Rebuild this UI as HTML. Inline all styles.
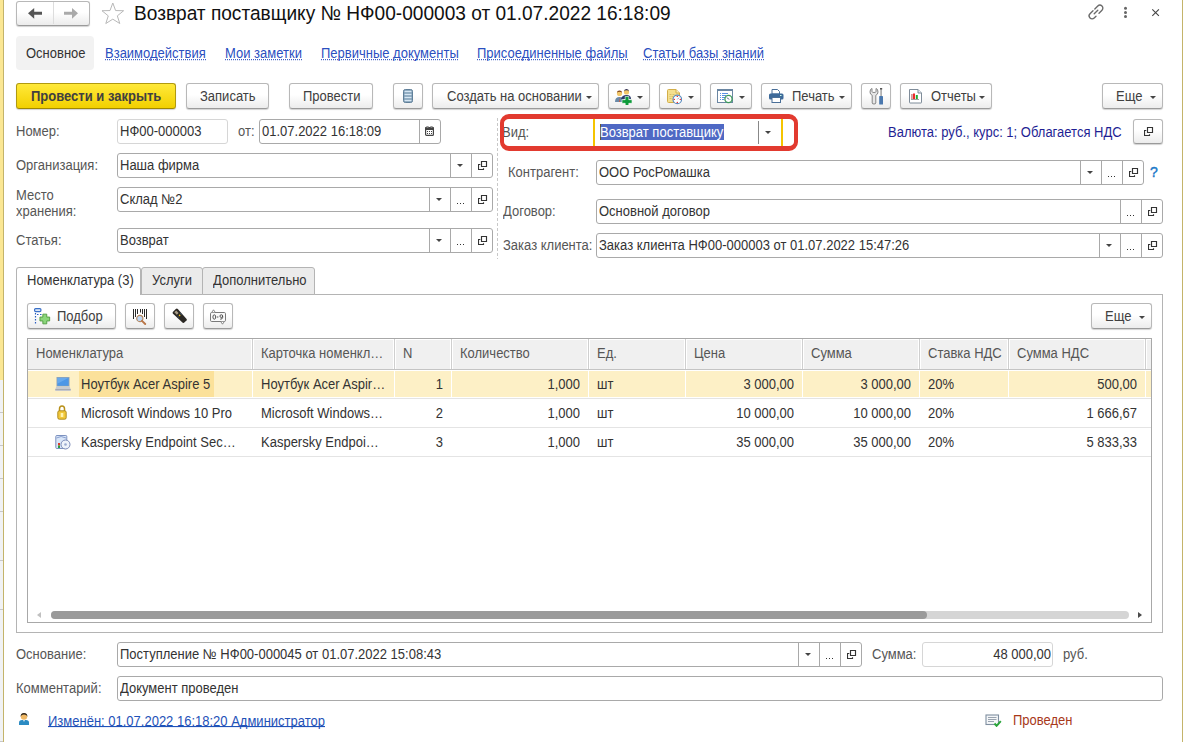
<!DOCTYPE html>
<html><head><meta charset="utf-8">
<style>
*{box-sizing:border-box;margin:0;padding:0}
html,body{width:1183px;height:742px;overflow:hidden;background:#fff}
body{position:relative;font-family:"Liberation Sans",sans-serif;font-size:13px;color:#333}
.a{position:absolute}
.t{position:absolute;line-height:15px;white-space:nowrap}
.t,.v,.bt{transform:scaleY(1.1);transform-origin:0 12px}
.lb{color:#565656}
.btn{position:absolute;height:26px;border:1px solid #b8b8b8;border-bottom-color:#9a9a9a;border-radius:3px;background:linear-gradient(#fff 0,#fff 45%,#ececec 100%);box-shadow:0 1px 1px rgba(0,0,0,.18);line-height:23px;text-align:center;color:#333;white-space:nowrap}
.fld{position:absolute;height:25px;border:1px solid #a9a9a9;border-radius:3px;background:#fff;white-space:nowrap}
.fld .v{position:absolute;left:2px;top:4px;line-height:15px;color:#333}
.seg{position:absolute;top:0;bottom:0;width:21px;border-left:1px solid #a9a9a9}
.dd:after{content:"";position:absolute;left:6px;top:10px;border-left:3px solid transparent;border-right:3px solid transparent;border-top:3px solid #444}
.dots:after{content:"";position:absolute;left:6px;top:15px;width:1px;height:1px;background:#333;box-shadow:3px 0 0 #333,6px 0 0 #333}
.op svg{position:absolute;left:6px;top:7px}
.link{color:#2b4fbf}
.dl{background:repeating-linear-gradient(90deg,#2b4fbf 0 1px,transparent 1px 2px) 0 13px/100% 1px no-repeat}
.bt{position:absolute;top:5px;line-height:15px;color:#404040}
.ba{position:absolute;top:12px;width:0;height:0;border-left:3px solid transparent;border-right:3px solid transparent;border-top:3px solid #444}
.arr{display:inline-block;width:0;height:0;border-left:3.5px solid transparent;border-right:3.5px solid transparent;border-top:3.5px solid #444;vertical-align:middle;margin-left:6px;position:relative;top:-1px}
</style></head><body>
<div class="a" style="left:0;top:0;width:3px;height:380px;background:#fbe794"></div>
<div class="a" style="left:0;top:380px;width:3px;height:362px;background:#f1f2f4"></div>
<div class="a" style="left:0;top:412px;width:3px;height:1px;background:#c8c8c8"></div>
<div class="a" style="left:0;top:445px;width:3px;height:1px;background:#c8c8c8"></div>
<div class="a" style="left:0;top:478px;width:3px;height:1px;background:#c8c8c8"></div>
<div class="a" style="left:0;top:511px;width:3px;height:1px;background:#c8c8c8"></div>
<div class="a" style="left:0;top:560px;width:3px;height:1px;background:#c8c8c8"></div>
<div class="a" style="left:0;top:609px;width:3px;height:1px;background:#c8c8c8"></div>
<div class="a" style="left:0;top:741px;width:3px;height:1px;background:#c8c8c8"></div>
<div class="a" style="left:3px;top:0;width:1px;height:742px;background:#c4b46a"></div>
<div class="a" style="left:1182px;top:0;width:1px;height:742px;background:#c4b46a"></div>
<div class="btn" style="left:16px;top:1px;width:74px;height:25px"></div>
<div class="a" style="left:53px;top:2px;width:1px;height:22px;background:#ddd"></div>
<svg class="a" style="left:0;top:0" width="90" height="26"><path d="M28 13.3 L34.2 8 V11.8 H42 V14.8 H34.2 V18.8 Z" fill="#555"/><path d="M78 13.3 L72 8 V11.8 H64 V14.8 H72 V18.8 Z" fill="#aaa"/></svg>
<svg class="a" style="left:101px;top:2px" width="24" height="23" viewBox="-0.3 -0.3 24 23"><path d="M11.50 0.70 L14.30 8.25 L22.32 8.42 L16.03 13.57 L18.49 21.23 L11.50 16.86 L4.51 21.23 L6.97 13.57 L0.68 8.42 L8.70 8.25 Z" fill="none" stroke="#b8b8b8" stroke-width="1"/></svg>
<div class="t" style="left:134px;top:3px;font-size:19.1px;line-height:22px;color:#111;transform:scaleY(1.07);transform-origin:0 17px">Возврат поставщику № НФ00-000003 от 01.07.2022 16:18:09</div>
<svg class="a" style="left:1084.5px;top:1px" width="22" height="22" viewBox="-2 -2 26 26"><g transform="rotate(-45 11 11)" fill="none" stroke="#6a6a6a" stroke-width="1.6" stroke-linecap="round"><path d="M9.5 7.5 H4.5 A3.5 3.5 0 0 0 4.5 14.5 H7.5"/><path d="M12.5 7.5 H17.5 A3.5 3.5 0 0 1 17.5 14.5 H12.5"/><path d="M8 11 H14"/></g></svg>
<svg class="a" style="left:1122px;top:5px" width="8" height="15" viewBox="0 0 8 15"><circle cx="3.5" cy="3.3" r="1.5" fill="#666"/><circle cx="3.5" cy="7.5" r="1.5" fill="#666"/><circle cx="3.5" cy="11.4" r="1.5" fill="#666"/></svg>
<svg class="a" style="left:1150px;top:7px" width="11" height="11" viewBox="0 0 11 11"><path d="M2.3 2.3 L8.9 8.9 M8.9 2.3 L2.3 8.9" stroke="#444" stroke-width="1.1"/></svg>
<div class="a" style="left:16px;top:36px;width:78px;height:34px;background:#f2f2f2;border-radius:4px"></div>
<div class="t" style="left:26px;top:46px">Основное</div>
<div class="t link dl" style="left:105px;top:46px">Взаимодействия</div>
<div class="t link dl" style="left:225px;top:46px">Мои заметки</div>
<div class="t link dl" style="left:321px;top:46px">Первичные документы</div>
<div class="t link dl" style="left:477px;top:46px">Присоединенные файлы</div>
<div class="t link dl" style="left:643px;top:46px">Статьи базы знаний</div>
<div class="btn" style="left:16px;top:83px;width:160px;border-color:#b09a10;border-bottom-color:#a08800;background:linear-gradient(#ffe93a,#f2d000);font-weight:bold"><span class="bt" style="left:14px">Провести и закрыть</span></div>
<div class="btn" style="left:186px;top:83px;width:83px;height:26px;"><span class="bt" style="left:13px">Записать</span></div>
<div class="btn" style="left:289px;top:83px;width:84px;height:26px;"><span class="bt" style="left:13px">Провести</span></div>
<div class="btn" style="left:393px;top:83px;width:30px;height:26px;"><svg class="a" style="left:9px;top:5px" width="10" height="14" viewBox="0 0 10 14"><rect x="0.5" y="0.5" width="9" height="13" rx="1.8" fill="#7c9bb3" stroke="#5f7f99"/><path d="M1.5 2.5h7M1.5 5.5h7M1.5 8.5h7M1.5 11.5h7" stroke="#d6e6f3" stroke-width="1.6"/></svg></div>
<div class="btn" style="left:432px;top:83px;width:167px;height:26px;"><span class="bt" style="left:14px">Создать на основании</span><span class="ba" style="left:153px"></span></div>
<div class="btn" style="left:608px;top:83px;width:42px;height:26px;"><span class="ba" style="left:28px"></span><svg class="a" style="left:5px;top:4px" width="18" height="17" viewBox="0 0 18 17"><path d="M1 14 Q1 9 5.5 9 Q10 9 10 14 Z" fill="#6a8aa8"/><path d="M5.5 9.5 L5 14 L6 14 Z" fill="#d05a3a"/><circle cx="5.5" cy="5.5" r="2.6" fill="#f2c76a"/><path d="M2.9 5 Q3 2.6 5.5 2.6 Q8 2.6 8.1 5 Q7.5 3.8 5.5 3.8 Q3.5 3.8 2.9 5Z" fill="#7a3a10"/><path d="M7 11 Q8 7 12.5 7 Q17 7 17 11 Z" fill="#2c3a6a"/><circle cx="12.5" cy="4" r="2.6" fill="#f2c76a"/><path d="M9.9 3.5 Q10 1 12.5 1 Q15 1 15.1 3.5 Q14.5 2.2 12.5 2.2 Q10.5 2.2 9.9 3.5Z" fill="#2a2a55"/><path d="M11.2 8.5h3.6v3.2h3.2v3.6h-3.2v3.2h-3.6v-3.2h-3.2v-3.6h3.2z" fill="#0d9a3a" stroke="#fff" stroke-width="0.6"/></svg></div>
<div class="btn" style="left:659px;top:83px;width:42px;height:26px;"><span class="ba" style="left:28px"></span><svg class="a" style="left:7px;top:5px" width="15" height="16" viewBox="0 0 15 16"><path d="M0.5 1.5 Q0.5 0.5 1.5 0.5 H9 L12.5 4 V13.5 H1.5 Q0.5 13.5 0.5 12.5 Z" fill="#f4df8e" stroke="#d2ae4a"/><path d="M9 0.5 V4 H12.5" fill="#fbefc0" stroke="#d2ae4a"/><path d="M2.5 5.5h2M5.5 5.5h2M2.5 7.5h1M4.5 7.5h2M2.5 9.5h2" stroke="#d8be6a"/><circle cx="10.3" cy="10.4" r="4.3" fill="#fff" stroke="#5b8cbf" stroke-width="1.2"/><circle cx="10.3" cy="7.4" r="0.7" fill="#e22"/><circle cx="10.3" cy="13.4" r="0.7" fill="#e22"/><circle cx="7.3" cy="10.4" r="0.7" fill="#e22"/><circle cx="13.3" cy="10.4" r="0.7" fill="#e22"/><path d="M10.3 10.4 L12 8.7" stroke="#7a9ad0" stroke-width="0.9"/></svg></div>
<div class="btn" style="left:710px;top:83px;width:42px;height:26px;"><span class="ba" style="left:28px"></span><svg class="a" style="left:6px;top:5px" width="17" height="16" viewBox="0 0 17 16"><rect x="0.5" y="0.5" width="15" height="13" fill="#fff" stroke="#6a86a2"/><rect x="0" y="0" width="16" height="2" fill="#6a86a2"/><path d="M3 4.5h1M5 4.5h6M3 6.5h1M5 6.5h4M3 8.5h1M5 8.5h3M3 10.5h1M5 10.5h2" stroke="#5a92e2"/><circle cx="11.5" cy="10" r="3.6" fill="#fff" stroke="#3e9a5c" stroke-width="1.3"/><path d="M10 8.5 L12 10.5" stroke="#3a4a6a" stroke-width="1"/></svg></div>
<div class="btn" style="left:761px;top:83px;width:91px;height:26px;"><span class="bt" style="left:30px">Печать</span><span class="ba" style="left:77px"></span><svg class="a" style="left:7px;top:5px" width="15" height="14" viewBox="0 0 15 14"><path d="M3 0.5 H8.5 L10.5 2.5 V5 H3 Z" fill="#fff" stroke="#4a6f98"/><rect x="0" y="4.5" width="14.5" height="6" rx="1.5" fill="#3d6a9a"/><rect x="3" y="8.5" width="8.5" height="5" fill="#fff" stroke="#4a6f98"/><rect x="11" y="6" width="1.5" height="1" fill="#cfe"/></svg></div>
<div class="btn" style="left:861px;top:83px;width:30px;height:26px;"><svg class="a" style="left:7px;top:4px" width="16" height="17" viewBox="0 0 16 17"><path d="M1 4 Q1 0.8 3 0.5 V3.5 Q3 4.5 5 4.5 Q7 4.5 7 3.5 V0.5 Q9 0.8 9 4 Q9 6.5 6.8 7.3 V15 Q6.8 16 5 16 Q3.2 16 3.2 15 V7.3 Q1 6.5 1 4Z" fill="#e6e6e6" stroke="#7a7a7a" stroke-width="0.9"/><rect x="11.3" y="0.5" width="1.6" height="8" fill="#aaa"/><rect x="11" y="0" width="2.2" height="1.5" fill="#555"/><rect x="10.2" y="8" width="3.8" height="8.5" rx="0.6" fill="#4a78ae"/></svg></div>
<div class="btn" style="left:900px;top:83px;width:92px;height:26px;"><span class="bt" style="left:30px">Отчеты</span><span class="ba" style="left:78px"></span><svg class="a" style="left:8px;top:5px" width="13" height="15" viewBox="0 0 13 15"><path d="M0.5 0.5 H9 L12.5 4 V13.5 Q12.5 14 12 14 H1 Q0.5 14 0.5 13.5 Z" fill="#fff" stroke="#7f8c99"/><path d="M9 0.5 V4 H12.5" fill="#e8eef3" stroke="#7f8c99"/><rect x="2.5" y="5" width="0.9" height="5" fill="#a33"/><rect x="4" y="4.5" width="2" height="5.5" fill="#ee2a2a"/><rect x="6.8" y="6" width="2" height="4" fill="#22aa33"/><path d="M2 10.5h8" stroke="#888" stroke-width="0.8"/></svg></div>
<div class="btn" style="left:1102px;top:83px;width:61px;height:26px;"><span class="bt" style="left:13px">Еще</span><span class="ba" style="left:47px"></span></div>
<div class="t lb" style="left:16px;top:124px;">Номер:</div>
<div class="fld" style="left:117px;top:119px;width:111px;height:25px;border-color:#d6d6d6;"><span class="v">НФ00-000003</span></div>
<div class="t lb" style="left:238px;top:124px;">от:</div>
<div class="fld" style="left:259px;top:119px;width:182px;height:25px;"><span class="v">01.07.2022 16:18:09</span><div class="seg cal" style="left:159px"><svg style="position:absolute;left:5px;top:6px" width="10" height="11" viewBox="0 0 10 11"><rect x="0.6" y="1.6" width="7.8" height="7.8" rx="1" fill="#fff" stroke="#444" stroke-width="1.2"/><rect x="0" y="1" width="9" height="3" rx="1" fill="#444"/><path d="M2 5.5h1M4 5.5h1M6 5.5h1M2 7.5h1M4 7.5h1M6 7.5h1" stroke="#444" stroke-width="1.1"/><circle cx="2.5" cy="1" r="0.85" fill="#fff" stroke="#444" stroke-width="0.7"/><circle cx="6.5" cy="1" r="0.85" fill="#fff" stroke="#444" stroke-width="0.7"/></svg></div></div>
<div class="t lb" style="left:16px;top:158px;">Организация:</div>
<div class="fld" style="left:117px;top:153px;width:376px;height:25px;"><span class="v">Наша фирма</span><div class="seg dd" style="left:332px"></div><div class="seg op" style="left:353px"><svg width="10" height="10" viewBox="0 0 10 10"><path d="M3.5 0.5h5v5h-5z M2.3 3.5h-1.8v5h5v-1.3" fill="none" stroke="#333" stroke-width="1.15"/></svg></div></div>
<div class="t lb" style="left:16px;top:188px;">Место</div>
<div class="t lb" style="left:16px;top:204px;">хранения:</div>
<div class="fld" style="left:117px;top:187px;width:376px;height:25px;"><span class="v">Склад №2</span><div class="seg dd" style="left:311px"></div><div class="seg dots" style="left:332px"></div><div class="seg op" style="left:353px"><svg width="10" height="10" viewBox="0 0 10 10"><path d="M3.5 0.5h5v5h-5z M2.3 3.5h-1.8v5h5v-1.3" fill="none" stroke="#333" stroke-width="1.15"/></svg></div></div>
<div class="t lb" style="left:16px;top:233px;">Статья:</div>
<div class="fld" style="left:117px;top:228px;width:376px;height:25px;"><span class="v">Возврат</span><div class="seg dd" style="left:311px"></div><div class="seg dots" style="left:332px"></div><div class="seg op" style="left:353px"><svg width="10" height="10" viewBox="0 0 10 10"><path d="M3.5 0.5h5v5h-5z M2.3 3.5h-1.8v5h5v-1.3" fill="none" stroke="#333" stroke-width="1.15"/></svg></div></div>
<div class="a" style="left:497px;top:118px;width:1px;height:141px;background:repeating-linear-gradient(#c8c8c8 0,#c8c8c8 3px,transparent 3px,transparent 5px)"></div>
<div class="t lb" style="left:502px;top:125px;">Вид:</div>
<div class="t lb" style="left:508px;top:165px;">Контрагент:</div>
<div class="fld" style="left:596px;top:160px;width:548px;height:25px;"><span class="v">ООО РосРомашка</span><div class="seg dd" style="left:483px"></div><div class="seg dots" style="left:504px"></div><div class="seg op" style="left:525px"><svg width="10" height="10" viewBox="0 0 10 10"><path d="M3.5 0.5h5v5h-5z M2.3 3.5h-1.8v5h5v-1.3" fill="none" stroke="#333" stroke-width="1.15"/></svg></div></div>
<div class="t" style="left:1150px;top:165px;color:#1b78c8;font-size:14px;-webkit-text-stroke:0.4px #1b78c8">?</div>
<div class="t lb" style="left:503px;top:204px;">Договор:</div>
<div class="fld" style="left:596px;top:199px;width:567px;height:25px;"><span class="v">Основной договор</span><div class="seg dots" style="left:523px"></div><div class="seg op" style="left:544px"><svg width="10" height="10" viewBox="0 0 10 10"><path d="M3.5 0.5h5v5h-5z M2.3 3.5h-1.8v5h5v-1.3" fill="none" stroke="#333" stroke-width="1.15"/></svg></div></div>
<div class="t lb" style="left:503px;top:238px;">Заказ клиента:</div>
<div class="fld" style="left:596px;top:233px;width:567px;height:25px;"><span class="v">Заказ клиента НФ00-000003 от 01.07.2022 15:47:26</span><div class="seg dd" style="left:502px"></div><div class="seg dots" style="left:523px"></div><div class="seg op" style="left:544px"><svg width="10" height="10" viewBox="0 0 10 10"><path d="M3.5 0.5h5v5h-5z M2.3 3.5h-1.8v5h5v-1.3" fill="none" stroke="#333" stroke-width="1.15"/></svg></div></div>
<div class="a" style="left:593px;top:119px;width:2px;height:27px;background:#f5c400"></div>
<div class="a" style="left:781px;top:119px;width:2px;height:27px;background:#f5c400"></div>
<div class="a" style="left:758px;top:121px;width:1px;height:23px;background:#888"></div>
<div class="a" style="left:765px;top:131px;border-left:3px solid transparent;border-right:3px solid transparent;border-top:3px solid #444"></div>
<div class="a" style="left:600px;top:124px;width:124px;height:16px;background:#4f69c4;border-left:1px solid #6a5a30"></div>
<div class="t" style="left:600px;top:125px;color:#fff">Возврат поставщику</div>
<div class="a" style="left:500px;top:114px;width:298px;height:37px;border:4px solid #e23a2f;border-width:5px 4px;border-radius:9px"></div>
<div class="t" style="left:888px;top:125px;color:#1f1f94">Валюта: руб., курс: 1; Облагается НДС</div>
<div class="btn" style="left:1133px;top:119px;width:30px;height:25px"><span style="position:absolute;left:10px;top:7px;line-height:0"><svg width="10" height="10" viewBox="0 0 10 10"><path d="M3.5 0.5h5v5h-5z M2.3 3.5h-1.8v5h5v-1.3" fill="none" stroke="#333" stroke-width="1.15"/></svg></span></div>
<div class="a" style="left:16px;top:294px;width:1147px;height:339px;border:1px solid #b4b4b4;border-top-color:#b4b4b4"></div>
<div class="a" style="left:141px;top:267px;width:62px;height:28px;background:#ebebeb;border:1px solid #b4b4b4;border-radius:3px 3px 0 0"></div>
<div class="a" style="left:202px;top:267px;width:113px;height:28px;background:#ebebeb;border:1px solid #b4b4b4;border-radius:3px 3px 0 0"></div>
<div class="a" style="left:16px;top:267px;width:125px;height:28px;background:#fff;border:1px solid #b4b4b4;border-bottom:none;border-radius:3px 3px 0 0"></div>
<div class="t" style="left:27px;top:273px">Номенклатура (3)</div>
<div class="t" style="left:152px;top:273px">Услуги</div>
<div class="t" style="left:213px;top:273px">Дополнительно</div>
<div class="btn" style="left:27px;top:303px;width:89px;height:26px;"><span class="bt" style="left:29px">Подбор</span><svg class="a" style="left:6px;top:4px" width="17" height="17" viewBox="0 0 17 17"><rect x="0.6" y="0.6" width="6.3" height="3" rx="1" fill="#dce8f8" stroke="#3a70c8" stroke-width="1.2"/><path d="M1.5 5v11" stroke="#2a5ec0" stroke-width="1.2" stroke-dasharray="1.5 1.5"/><path d="M3 6.5h5" stroke="#2a5ec0" stroke-width="1.2" stroke-dasharray="1.5 1.5"/><path d="M8.85 6.15h3.9v2.9h2.9v3.9h-2.9v2.9h-3.9v-2.9h-2.9v-3.9h2.9z" fill="#8ad67a" stroke="#4f9a40" stroke-width="0.9"/></svg></div>
<div class="btn" style="left:125px;top:303px;width:30px;height:26px;"><svg class="a" style="left:6px;top:4px" width="17" height="17" viewBox="0 0 17 17"><path d="M1.5 1v10M3.5 1v8M5.5 1v5M8.5 1v3.5M10.5 1v5M12.5 1v8M14.5 1v10" stroke="#2a2a2a" stroke-width="1"/><circle cx="7.8" cy="10.5" r="3.1" fill="#bcd6f4" stroke="#b5875e" stroke-width="1.1"/><path d="M10 12.8 L13.2 16" stroke="#b9774a" stroke-width="1.9" stroke-linecap="round"/></svg></div>
<div class="btn" style="left:164px;top:303px;width:30px;height:26px;"><svg class="a" style="left:7px;top:4px" width="16" height="16" viewBox="0 0 16 16"><path d="M0.8 4 L3.8 1 Q4.8 0.2 5.8 1 L14.6 11 Q15.2 11.8 14.5 12.5 L12.3 14.6 Q11.5 15.3 10.7 14.7 L1 5.8 Q0.2 4.9 0.8 4Z" fill="#2b2824"/><path d="M2.4 4.3 L4.2 2.5 L6.6 5 L4.8 6.8Z" fill="#a89c86"/><circle cx="7.6" cy="7.3" r="0.85" fill="#f3c21a"/><path d="M5.8 8.5 L6.6 9.2 M8.6 5.6 L9.3 6.4" stroke="#4a8ad0" stroke-width="0.8"/></svg></div>
<div class="btn" style="left:203px;top:303px;width:30px;height:26px;"><svg class="a" style="left:6px;top:4px" width="17" height="17" viewBox="0 0 17 17"><rect x="0.5" y="4.5" width="15" height="9" rx="1.2" fill="#fafafa" stroke="#7a7a7a"/><path d="M1.8 4.3 L3.5 1.8 L5.2 4.3" fill="#fff" stroke="#7a7a7a" stroke-width="0.9"/><path d="M10.8 13.7 L12.5 16.2 L14.2 13.7" fill="#fff" stroke="#7a7a7a" stroke-width="0.9"/><ellipse cx="4.3" cy="9" rx="1.4" ry="2.2" fill="none" stroke="#444" stroke-width="0.9"/><path d="M6.8 9h1.6" stroke="#444" stroke-width="0.9"/><circle cx="11.3" cy="8.1" r="1.35" fill="none" stroke="#444" stroke-width="0.9"/><path d="M12.65 8.1 V9.5 Q12.6 11.2 10.2 11.2" fill="none" stroke="#444" stroke-width="0.9"/></svg></div>
<div class="btn" style="left:1091px;top:303px;width:61px;height:26px;"><span class="bt" style="left:13px">Еще</span><span class="ba" style="left:47px"></span></div>
<div class="a" style="left:27px;top:338px;width:1125px;height:285px;border:1px solid #a8a8a8;background:#fff"></div>
<div class="a" style="left:28px;top:339px;width:1123px;height:31px;background:#f0f0f0;border-top:1px solid #fff;border-bottom:1px solid #c4c4c4"></div>
<div class="a" style="left:28px;top:371px;width:1123px;height:26px;background:#fdf0c6"></div>
<div class="a" style="left:79px;top:371px;width:135px;height:26px;background:#fbe19a"></div>
<div class="a" style="left:28px;top:398px;width:1123px;height:1px;background:#e4e4e4"></div>
<div class="a" style="left:28px;top:427px;width:1123px;height:1px;background:#e4e4e4"></div>
<div class="a" style="left:28px;top:456px;width:1123px;height:1px;background:#e4e4e4"></div>
<div class="a" style="left:252px;top:339px;width:1px;height:30px;background:#cfcfcf;border-left:0"></div>
<div class="a" style="left:251px;top:340px;width:1px;height:29px;background:#fff"></div>
<div class="a" style="left:253px;top:340px;width:1px;height:29px;background:#fff"></div>
<div class="a" style="left:252px;top:371px;width:1px;height:26px;background:#fff"></div>
<div class="a" style="left:394px;top:339px;width:1px;height:30px;background:#cfcfcf;border-left:0"></div>
<div class="a" style="left:393px;top:340px;width:1px;height:29px;background:#fff"></div>
<div class="a" style="left:395px;top:340px;width:1px;height:29px;background:#fff"></div>
<div class="a" style="left:394px;top:371px;width:1px;height:26px;background:#fff"></div>
<div class="a" style="left:451px;top:339px;width:1px;height:30px;background:#cfcfcf;border-left:0"></div>
<div class="a" style="left:450px;top:340px;width:1px;height:29px;background:#fff"></div>
<div class="a" style="left:452px;top:340px;width:1px;height:29px;background:#fff"></div>
<div class="a" style="left:451px;top:371px;width:1px;height:26px;background:#fff"></div>
<div class="a" style="left:588px;top:339px;width:1px;height:30px;background:#cfcfcf;border-left:0"></div>
<div class="a" style="left:587px;top:340px;width:1px;height:29px;background:#fff"></div>
<div class="a" style="left:589px;top:340px;width:1px;height:29px;background:#fff"></div>
<div class="a" style="left:588px;top:371px;width:1px;height:26px;background:#fff"></div>
<div class="a" style="left:685px;top:339px;width:1px;height:30px;background:#cfcfcf;border-left:0"></div>
<div class="a" style="left:684px;top:340px;width:1px;height:29px;background:#fff"></div>
<div class="a" style="left:686px;top:340px;width:1px;height:29px;background:#fff"></div>
<div class="a" style="left:685px;top:371px;width:1px;height:26px;background:#fff"></div>
<div class="a" style="left:802px;top:339px;width:1px;height:30px;background:#cfcfcf;border-left:0"></div>
<div class="a" style="left:801px;top:340px;width:1px;height:29px;background:#fff"></div>
<div class="a" style="left:803px;top:340px;width:1px;height:29px;background:#fff"></div>
<div class="a" style="left:802px;top:371px;width:1px;height:26px;background:#fff"></div>
<div class="a" style="left:919px;top:339px;width:1px;height:30px;background:#cfcfcf;border-left:0"></div>
<div class="a" style="left:918px;top:340px;width:1px;height:29px;background:#fff"></div>
<div class="a" style="left:920px;top:340px;width:1px;height:29px;background:#fff"></div>
<div class="a" style="left:919px;top:371px;width:1px;height:26px;background:#fff"></div>
<div class="a" style="left:1008px;top:339px;width:1px;height:30px;background:#cfcfcf;border-left:0"></div>
<div class="a" style="left:1007px;top:340px;width:1px;height:29px;background:#fff"></div>
<div class="a" style="left:1009px;top:340px;width:1px;height:29px;background:#fff"></div>
<div class="a" style="left:1008px;top:371px;width:1px;height:26px;background:#fff"></div>
<div class="a" style="left:1145px;top:339px;width:1px;height:30px;background:#cfcfcf;border-left:0"></div>
<div class="a" style="left:1144px;top:340px;width:1px;height:29px;background:#fff"></div>
<div class="a" style="left:1146px;top:340px;width:1px;height:29px;background:#fff"></div>
<div class="a" style="left:1145px;top:371px;width:1px;height:26px;background:#fff"></div>
<div class="t lb" style="left:36px;top:346px">Номенклатура</div>
<div class="t lb" style="left:261px;top:346px">Карточка номенкл…</div>
<div class="t lb" style="left:403px;top:346px">N</div>
<div class="t lb" style="left:460px;top:346px">Количество</div>
<div class="t lb" style="left:597px;top:346px">Ед.</div>
<div class="t lb" style="left:694px;top:346px">Цена</div>
<div class="t lb" style="left:811px;top:346px">Сумма</div>
<div class="t lb" style="left:928px;top:346px">Ставка НДС</div>
<div class="t lb" style="left:1017px;top:346px">Сумма НДС</div>
<div class="t" style="left:81px;top:377px">Ноутбук Acer Aspire 5</div>
<div class="t" style="left:261px;top:377px">Ноутбук Acer Aspir…</div>
<div class="t" style="right:740px;top:377px">1</div>
<div class="t" style="right:603px;top:377px">1,000</div>
<div class="t" style="left:597px;top:377px">шт</div>
<div class="t" style="right:389px;top:377px">3 000,00</div>
<div class="t" style="right:272px;top:377px">3 000,00</div>
<div class="t" style="left:928px;top:377px">20%</div>
<div class="t" style="right:46px;top:377px">500,00</div>
<div class="t" style="left:81px;top:406px">Microsoft Windows 10 Pro</div>
<div class="t" style="left:261px;top:406px">Microsoft Windows…</div>
<div class="t" style="right:740px;top:406px">2</div>
<div class="t" style="right:603px;top:406px">1,000</div>
<div class="t" style="left:597px;top:406px">шт</div>
<div class="t" style="right:389px;top:406px">10 000,00</div>
<div class="t" style="right:272px;top:406px">10 000,00</div>
<div class="t" style="left:928px;top:406px">20%</div>
<div class="t" style="right:46px;top:406px">1 666,67</div>
<div class="t" style="left:81px;top:435px">Kaspersky Endpoint Sec…</div>
<div class="t" style="left:261px;top:435px">Kaspersky Endpoi…</div>
<div class="t" style="right:740px;top:435px">3</div>
<div class="t" style="right:603px;top:435px">1,000</div>
<div class="t" style="left:597px;top:435px">шт</div>
<div class="t" style="right:389px;top:435px">35 000,00</div>
<div class="t" style="right:272px;top:435px">35 000,00</div>
<div class="t" style="left:928px;top:435px">20%</div>
<div class="t" style="right:46px;top:435px">5 833,33</div>
<div class="a" style="left:51px;top:611px;width:1078px;height:8px;background:#d5d5d5;border-radius:4px"></div>
<div class="a" style="left:51px;top:611px;width:876px;height:8px;background:#9a9a9a;border-radius:4px"></div>
<div class="a" style="left:37px;top:612px;border-top:3px solid transparent;border-bottom:3px solid transparent;border-right:4px solid #c0c0c0"></div>
<div class="a" style="left:1138px;top:612px;border-top:3.5px solid transparent;border-bottom:3.5px solid transparent;border-left:4px solid #4a4a4a"></div>
<div class="t lb" style="left:16px;top:647px;">Основание:</div>
<div class="fld" style="left:117px;top:642px;width:745px;height:25px;"><span class="v">Поступление № НФ00-000045 от 01.07.2022 15:08:43</span><div class="seg dd" style="left:680px"></div><div class="seg dots" style="left:701px"></div><div class="seg op" style="left:722px"><svg width="10" height="10" viewBox="0 0 10 10"><path d="M3.5 0.5h5v5h-5z M2.3 3.5h-1.8v5h5v-1.3" fill="none" stroke="#333" stroke-width="1.15"/></svg></div></div>
<div class="t lb" style="left:872px;top:647px;">Сумма:</div>
<div class="fld" style="left:922px;top:642px;width:131px;height:25px;border-color:#d6d6d6"><span class="v" style="left:auto;right:1px">48 000,00</span></div>
<div class="t lb" style="left:1063px;top:647px;">руб.</div>
<div class="t lb" style="left:16px;top:681px;">Комментарий:</div>
<div class="fld" style="left:117px;top:676px;width:1046px;height:25px;"><span class="v">Документ проведен</span></div>
<div class="t" style="left:48px;top:714px;color:#1f52b8;background:linear-gradient(#1f52b8,#1f52b8) 0 12px/100% 1px no-repeat">Изменён: 01.07.2022 16:18:20 Администратор</div>
<div class="t" style="left:1013px;top:713px;color:#a8381a">Проведен</div>
<svg class="a" style="left:55px;top:377px" width="16" height="14" viewBox="0 0 16 14"><rect x="1.5" y="0" width="13" height="9.5" fill="#9aa4ae"/><rect x="2.3" y="0.8" width="11.4" height="8" fill="#4d97e6"/><path d="M2.3 0.8h11.4l-11.4 6z" fill="#7cb6f0" opacity=".6"/><path d="M1.3 9.5 H14.7 L16 13 Q16 14 15 14 H1 Q0 14 0 13 Z" fill="#c8cbd0"/><path d="M0.3 12.6h15.4" stroke="#9a9ea4" stroke-width="0.8"/></svg>
<svg class="a" style="left:57px;top:405px" width="10" height="15" viewBox="0 0 10 15"><path d="M2.5 6 V3.8 Q2.5 1 5 1 Q7.5 1 7.5 3.8 V6" fill="none" stroke="#b8901a" stroke-width="1.5"/><rect x="0.8" y="5.8" width="8.4" height="8.4" rx="1.5" fill="#f2c83a" stroke="#a88416" stroke-width="0.9"/><rect x="3.7" y="8" width="2.6" height="4" fill="#fff3b0"/></svg>
<svg class="a" style="left:55px;top:434px" width="16" height="16" viewBox="0 0 16 16"><rect x="0.8" y="1.5" width="11" height="13" rx="1" fill="#d9e6f8" stroke="#6f86b8" stroke-width="0.9"/><path d="M1.5 4 Q6 1 11 4" fill="none" stroke="#8aa0d0"/><rect x="3" y="9" width="2" height="2.5" fill="#dd3b2b"/><rect x="3" y="11.5" width="2" height="2.5" fill="#2aa040"/><circle cx="10.5" cy="10.5" r="4.5" fill="#eef2fa" stroke="#6f7fb0" stroke-width="0.9"/><circle cx="10.5" cy="10.5" r="1.3" fill="#9aaad0"/></svg>
<svg class="a" style="left:19px;top:712px" width="10" height="14" viewBox="0 0 10 14"><path d="M0 13 V10.5 Q0 8 3 8 H7 Q10 8 10 10.5 V13 Z" fill="#2b8bc3"/><path d="M4.2 8 L5 10 L5.8 8Z" fill="#fff"/><circle cx="5" cy="4.6" r="3.2" fill="#efb865"/><path d="M1.6 5.2 Q1.4 1 5 1 Q8.6 1 8.4 5.2 Q8 2.6 5 2.6 Q2 2.6 1.6 5.2Z" fill="#2d2418"/></svg>
<svg class="a" style="left:985px;top:714px" width="17" height="13" viewBox="0 0 17 13"><rect x="1" y="1" width="12.5" height="9.5" fill="#f4f6f8" stroke="#7f8fa0" stroke-width="1.1"/><path d="M3 3.5h8.5M3 5.5h8.5M3 7.5h6" stroke="#8f9aa6" stroke-width="0.9"/><path d="M9.5 9.5 L11.6 11.8 L15.8 7.2" fill="none" stroke="#2aa63a" stroke-width="2"/></svg>
</body></html>
